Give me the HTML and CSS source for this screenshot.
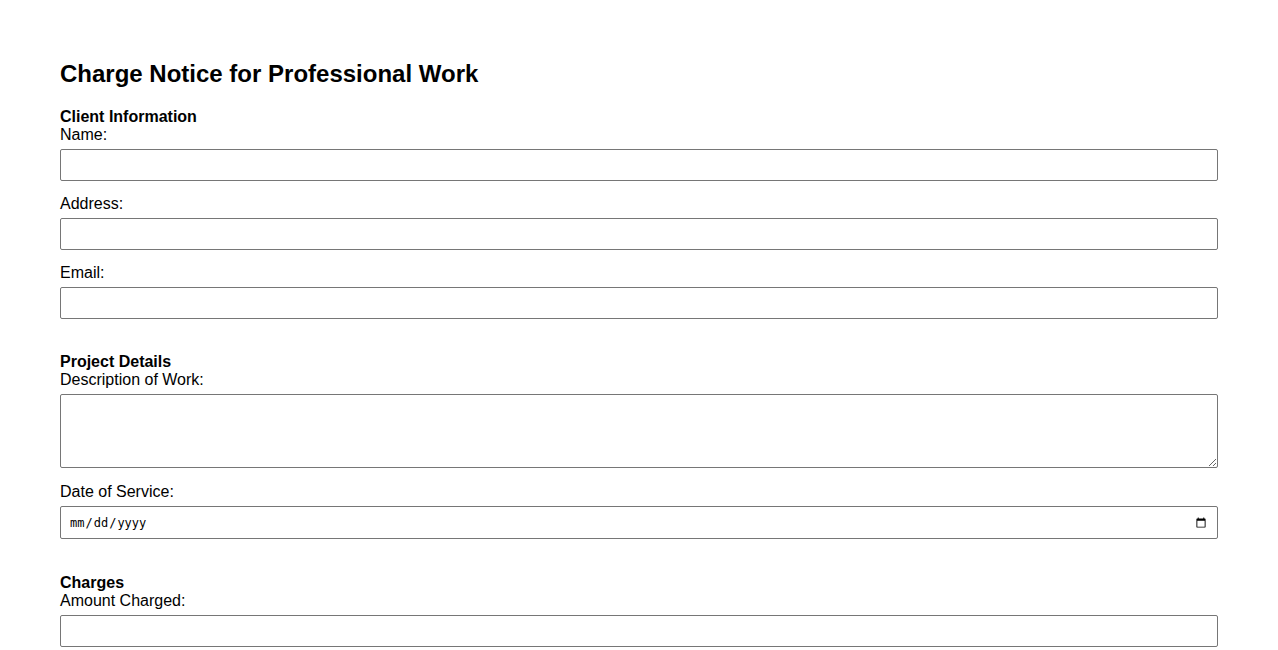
FILE: index.html
```html
<!doctype html>
<html>
	<head>
		<title>Charge Notice for Professional Work</title>
		<link rel="stylesheet" href="styles.css">
	</head>
	<body>
		<div id="page">
			<h2>Charge Notice for Professional Work</h2>
			<form>
				<div class="section">
					<div class="section-title">Client Information</div>
					<label for="name">Name:</label>
					<input type="text" id="name">
					<label for="address">Address:</label>
					<input type="text" id="address">
					<label for="email">Email:</label>
					<input type="email" id="email">
				</div>

				<div class="section project">
					<div class="section-title">Project Details</div>
					<label for="desc">Description of Work:</label>
					<textarea id="desc"></textarea>
					<label for="date">Date of Service:</label>
					<input type="date" id="date">
				</div>

				<div class="section">
					<div class="section-title">Charges</div>
					<label for="amount">Amount Charged:</label>
					<input type="text" id="amount">
				</div>
			</form>
		</div>
	</body>
</html>
```

FILE: styles.css
```css
body {
	margin: 0;
	font-family: "Liberation Sans", Arial, sans-serif;
	font-size: 16px;
	color: black;
	background: white;
}
#page {
	padding: 40px 60px;
}
h2 {
	font-size: 24px;
	margin: 20px 0 20px 0;
	line-height: 28px;
}
.section {
	margin-bottom: 34px;
}
.section.project {
	margin-bottom: 35px;
}
.section-title {
	font-weight: bold;
	line-height: 18px;
}
label {
	display: block;
	line-height: 18px;
}
input, textarea {
	display: block;
	width: 100%;
	box-sizing: border-box;
	margin: 5px 0 14px 0;
	border: 1px solid #767676;
	border-radius: 2px;
	padding: 6px 8px;
	font-size: 14px;
}
input {
	height: 32px;
}
input[type=date] {
	height: 33px;
	font-family: "DejaVu Sans Mono", monospace;
	font-size: 12px;
}
textarea {
	height: 74px;
	resize: vertical;
	margin-bottom: 15px;
}
.section input:last-child {
	margin-bottom: 0;
}
```
